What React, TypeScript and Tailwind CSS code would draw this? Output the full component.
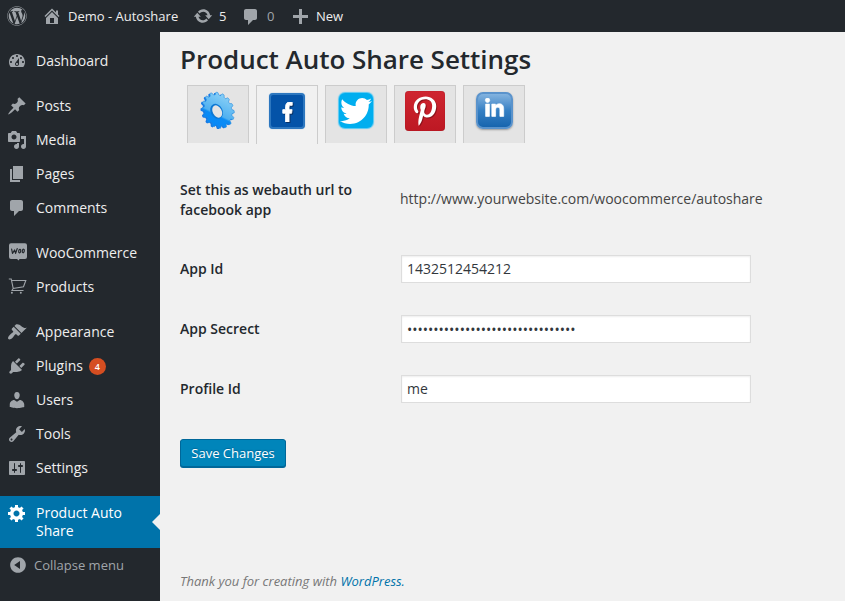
import type { ReactNode } from "react";
import { FaFacebookF, FaLinkedinIn, FaPinterestP, FaTwitter, FaWordpress } from "react-icons/fa";

const paths = {
  home: "M16 8.5l1.53 1.53-1.06 1.06L10 4.6l-6.47 6.49-1.06-1.06L10 2.5l4 4v-2h2v4zm-6-2.46l6 5.99V18H4v-5.97zM12 17v-5H8v5h4z",
  update:
    "M10.2 3.28c3.53 0 6.43 2.61 6.92 6h2.08l-3.5 4-3.5-4h2.32c-.45-1.97-2.21-3.45-4.32-3.45-1.45 0-2.73.71-3.54 1.78L4.95 5.66C6.23 4.2 8.11 3.28 10.2 3.28zm-.4 13.44c-3.52 0-6.43-2.61-6.92-6H.8l3.5-4c1.17 1.33 2.33 2.67 3.5 4H5.48c.45 1.97 2.21 3.45 4.32 3.45 1.45 0 2.73-.71 3.54-1.78l1.71 1.95c-1.28 1.46-3.15 2.38-5.25 2.38z",
  plus: "M17 9v3h-6v6H8v-6H2V9h6V3h3v6h6z",
  dashboard:
    "M3.76 16h12.48c1.1-1.37 1.76-3.11 1.76-5 0-4.42-3.58-8-8-8s-8 3.58-8 8c0 1.89.66 3.63 1.76 5zM10 4c.55 0 1 .45 1 1s-.45 1-1 1-1-.45-1-1 .45-1 1-1zM6 6c.55 0 1 .45 1 1s-.45 1-1 1-1-.45-1-1 .45-1 1-1zm8 0c.55 0 1 .45 1 1s-.45 1-1 1-1-.45-1-1 .45-1 1-1zm-5.37 5.55L12 7v6c0 1.1-.9 2-2 2s-2-.9-2-2c0-.57.24-1.08.63-1.45zM4 10c.55 0 1 .45 1 1s-.45 1-1 1-1-.45-1-1 .45-1 1-1zm12 0c.55 0 1 .45 1 1s-.45 1-1 1-1-.45-1-1 .45-1 1-1zm-5 3c0-.55-.45-1-1-1s-1 .45-1 1 .45 1 1 1 1-.45 1-1z",
  post: "M10.44 3.02l1.82-1.82 6.36 6.35-1.83 1.82c-1.05-.68-2.48-.57-3.41.36l-.75.75c-.92.93-1.04 2.35-.35 3.41l-1.83 1.82-2.41-2.41-2.8 2.79c-.42.42-3.38 2.71-3.8 2.29s1.86-3.39 2.28-3.81l2.79-2.79L4.1 9.36l1.83-1.82c1.05.69 2.48.57 3.4-.36l.75-.75c.93-.92 1.05-2.35.36-3.41z",
  media:
    "M13 11V4c0-.55-.45-1-1-1h-1.67L9 1H5L3.67 3H2c-.55 0-1 .45-1 1v7c0 .55.45 1 1 1h10c.55 0 1-.45 1-1zM7 4.5c1.38 0 2.5 1.12 2.5 2.5S8.38 9.5 7 9.5 4.5 8.38 4.5 7 5.62 4.5 7 4.5zM14 6h5v10.5c0 1.38-1.12 2.5-2.5 2.5S14 17.88 14 16.5s1.12-2.5 2.5-2.5c.17 0 .34.02.5.05V9h-3V6zm-4 8.05V13h2v3.5c0 1.38-1.12 2.5-2.5 2.5S7 17.88 7 16.5 8.12 14 9.5 14c.17 0 .34.02.5.05z",
  page: "M6 15V2h10v13H6zm-1 1h8v2H3V5h2v11z",
  comment: "M5 2h9c1.1 0 2 .9 2 2v7c0 1.1-.9 2-2 2h-2l-5 5v-5H5c-1.1 0-2-.9-2-2V4c0-1.1.9-2 2-2z",
  appearance:
    "M14.48 11.06L7.41 3.99l1.5-1.5c.5-.56 2.3-.47 3.51.32 1.21.8 1.43 1.28 2.91 2.1 1.18.64 2.45 1.26 4.45.85zm-.71.71L6.7 4.7 4.93 6.47c-.39.39-.39 1.02 0 1.41l1.06 1.06c.39.39.39 1.03 0 1.42-.6.6-1.43 1.11-2.21 1.69-.35.26-.7.53-1.01.84C1.43 14.23.4 16.08 1.4 17.07c.99 1 2.84-.03 4.18-1.36.31-.31.58-.66.85-1.02.57-.78 1.08-1.61 1.69-2.21.39-.39 1.02-.39 1.41 0l1.06 1.06c.39.39 1.02.39 1.41 0z",
  plugins:
    "M13.11 4.36L9.87 7.6 8 5.73l3.24-3.24c.35-.34 1.05-.2 1.56.32.52.51.66 1.21.31 1.55zm-8 1.77l.91-1.12 9.01 9.01-1.19.84c-.71.71-2.63 1.16-3.82 1.16H6.14L4.9 17.26c-.59.59-1.54.59-2.12 0-.59-.58-.59-1.53 0-2.12l1.24-1.24v-3.88c0-1.13.4-3.19 1.09-3.89zm7.26 3.97l3.24-3.24c.34-.35 1.04-.21 1.55.31.52.51.66 1.21.31 1.55l-3.24 3.25z",
  users:
    "M10 9.25c-2.27 0-2.73-3.44-2.73-3.44C7 4.02 7.82 2 9.97 2c2.16 0 2.98 2.02 2.71 3.81 0 0-.41 3.44-2.68 3.44zm0 2.57L12.72 10c2.39 0 4.52 2.33 4.52 4.53v2.49s-3.65 1.13-7.24 1.13c-3.65 0-7.24-1.13-7.24-1.13v-2.49c0-2.25 1.94-4.48 4.47-4.48z",
  tools:
    "M16.68 9.77c-1.34 1.34-3.3 1.67-4.95.99l-5.41 6.52c-.99.99-2.59.99-3.58 0s-.99-2.59 0-3.57l6.52-5.42c-.68-1.65-.35-3.61.99-4.95 1.28-1.28 3.12-1.62 4.72-1.06l-2.89 2.89 2.82 2.82 2.86-2.87c.53 1.58.18 3.39-1.08 4.65zM3.81 16.21c.4.39 1.04.39 1.43 0 .4-.4.4-1.04 0-1.43-.39-.4-1.03-.4-1.43 0-.39.39-.39 1.03 0 1.43z",
  settings:
    "M18 16V4c0-.55-.45-1-1-1H3c-.55 0-1 .45-1 1v12c0 .55.45 1 1 1h14c.55 0 1-.45 1-1zM8 11h1c.55 0 1 .45 1 1s-.45 1-1 1H8v1.5c0 .28-.22.5-.5.5s-.5-.22-.5-.5V13H6c-.55 0-1-.45-1-1s.45-1 1-1h1V5.5c0-.28.22-.5.5-.5s.5.22.5.5V11zm5-2h-1c-.55 0-1-.45-1-1s.45-1 1-1h1V5.5c0-.28.22-.5.5-.5s.5.22.5.5V7h1c.55 0 1 .45 1 1s-.45 1-1 1h-1v5.500c0 .28-.22.5-.5.5s-.5-.22-.5-.5V9z",
  generic:
    "M18 12h-2.18c-.17.7-.44 1.35-.81 1.93l1.54 1.54-2.1 2.1-1.54-1.54c-.58.36-1.23.63-1.91.79V19H8v-2.18c-.68-.16-1.33-.43-1.91-.79l-1.54 1.54-2.12-2.12 1.54-1.54c-.36-.58-.63-1.23-.79-1.91H1V9.03h2.17c.16-.7.44-1.35.8-1.94L2.43 5.55l2.1-2.1 1.54 1.54c.58-.37 1.24-.64 1.93-.81V2h3v2.18c.68.16 1.33.43 1.91.79l1.54-1.54 2.12 2.12-1.54 1.54c.36.59.64 1.24.8 1.94H18V12zm-8.5 1.5c1.66 0 3-1.34 3-3s-1.34-3-3-3-3 1.34-3 3 1.34 3 3 3z",
  collapse:
    "M10 2.16c4.33 0 7.84 3.51 7.84 7.84s-3.51 7.84-7.84 7.84S2.16 14.33 2.16 10 5.71 2.16 10 2.16zm2 11.72V6.12L6.18 9.97z",
};

function Icon({ name, className = "" }: { name: keyof typeof paths; className?: string }) {
  return (
    <svg viewBox="0 0 20 20" className={`size-5 shrink-0 fill-current ${className}`}>
      <path fillRule="evenodd" d={paths[name]} />
    </svg>
  );
}

function WooIcon() {
  return (
    <svg viewBox="0 0 20 20" className="size-5 shrink-0">
      <path d="M4 .2h14a2 2 0 0 1 2 2V14a2 2 0 0 1-2 2h-5.500l-.8 1.600L10 16H4a2 2 0 0 1-2-2V2.200a2 2 0 0 1 2-2z" fill="#a0a5aa" />
      <g fill="none" stroke="#23282d" strokeWidth="1.2" strokeLinecap="round" strokeLinejoin="round">
        <path d="M4.600 6l.9 4.400L7.600 7l1 3.400L10.200 5.600" />
        <ellipse cx="12.700" cy="8.100" rx="1" ry="1.800" transform="rotate(12 12.700 8.100)" />
        <ellipse cx="16.300" cy="8" rx="1" ry="1.800" transform="rotate(12 16.300 8)" />
      </g>
    </svg>
  );
}

function CartIcon() {
  return (
    <svg viewBox="0 0 20 20" className="size-5 shrink-0 text-[#a0a5aa]" fill="none" stroke="currentColor" strokeWidth="1.1">
      <path d="M1.800 2h2.400l2 9.500L5 13.500h11.500M4.600 3.500h14.200l-2.300 6.300L6 11.500" />
      <circle cx="4.900" cy="15.800" r="1" fill="currentColor" stroke="none" />
      <circle cx="13.800" cy="15.800" r="1" fill="currentColor" stroke="none" />
    </svg>
  );
}

function MenuItem({ icon, children }: { icon: ReactNode; children: ReactNode }) {
  return (
    <li className="flex h-[34px] items-center gap-[9px] pl-[7px] text-[#a0a5aa]">
      {icon}
      <span className="flex items-center text-sm leading-[18px] text-[#eee]">{children}</span>
    </li>
  );
}

function Sidebar() {
  return (
    <nav className="w-40 shrink-0 bg-[#23282d] pt-3">
      <ul>
        <MenuItem icon={<Icon name="dashboard" />}>Dashboard</MenuItem>
      </ul>
      <ul className="mt-[11px]">
        <MenuItem icon={<Icon name="post" />}>Posts</MenuItem>
        <MenuItem icon={<Icon name="media" />}>Media</MenuItem>
        <MenuItem icon={<Icon name="page" />}>Pages</MenuItem>
        <MenuItem icon={<Icon name="comment" />}>Comments</MenuItem>
      </ul>
      <ul className="mt-[11px]">
        <MenuItem icon={<WooIcon />}>WooCommerce</MenuItem>
        <MenuItem icon={<CartIcon />}>Products</MenuItem>
      </ul>
      <ul className="mt-[11px]">
        <MenuItem icon={<Icon name="appearance" />}>Appearance</MenuItem>
        <MenuItem icon={<Icon name="plugins" />}>
          Plugins
          <span className="ml-[6px] flex size-[17px] items-center justify-center rounded-full bg-[#d54e21] text-[9px] font-semibold leading-[17px] text-white">
            4
          </span>
        </MenuItem>
        <MenuItem icon={<Icon name="users" />}>Users</MenuItem>
        <MenuItem icon={<Icon name="tools" />}>Tools</MenuItem>
        <MenuItem icon={<Icon name="settings" />}>Settings</MenuItem>
      </ul>
      <div className="relative mt-[11px] flex h-[52px] gap-[9px] bg-[#0073aa] pl-[7px] pt-2 text-white">
        <Icon name="generic" className="-mt-px" />
        <span className="w-[100px] text-sm leading-[18px]">Product Auto Share</span>
        <span className="absolute right-0 top-[18px] border-y-8 border-r-8 border-y-transparent border-r-[#f1f1f1]" />
      </div>
      <div className="flex h-[34px] items-center gap-[6px] pl-2 text-[#a0a5aa]">
        <Icon name="collapse" />
        <span className="text-[13px] leading-[18px]">Collapse menu</span>
      </div>
    </nav>
  );
}

function TopBar() {
  return (
    <header className="flex h-8 shrink-0 items-center bg-[#23282d] pl-[7px] text-[13px] text-[#eee]">
      <FaWordpress className="size-5 text-[#a0a5aa]" />
      <Icon name="home" className="ml-[15px] text-[#a0a5aa]" />
      <span className="ml-[6px] w-[125px] pt-px">Demo - Autoshare</span>
      <Icon name="update" className="text-[#a0a5aa]" />
      <span className="ml-[6px] w-[22px] pt-px">5</span>
      <Icon name="comment" className="mt-px text-[#a0a5aa]" />
      <span className="ml-[6px] w-[24px] pt-px text-[#a0a5aa]">0</span>
      <Icon name="plus" className="text-[#a0a5aa]" />
      <span className="ml-[5px] pt-px">New</span>
    </header>
  );
}

const TILT = (-28 * Math.PI) / 180;

// Outline of a 16-tooth gear seen at an angle, centred on (cx, cy).
function gearOutline(cx: number, cy: number) {
  const points: string[] = [];
  for (let i = 0; i < 192; i++) {
    const a = (i / 192) * Math.PI * 2;
    const wave = Math.max(-1, Math.min(1, Math.sin(a * 16) * 1.8));
    const r = 17.4 + wave * 1.3;
    const x = Math.cos(a) * r * 0.82;
    const y = Math.sin(a) * r;
    const px = cx + x * Math.cos(TILT) - y * Math.sin(TILT);
    const py = cy + x * Math.sin(TILT) + y * Math.cos(TILT);
    points.push(`${px.toFixed(2)},${py.toFixed(2)}`);
  }
  return `M${points.join("L")}Z`;
}

function GearLogo() {
  return (
    <svg viewBox="0 0 40 40" className="size-10">
      <defs>
        <linearGradient id="gear" gradientUnits="userSpaceOnUse" x1="11" y1="34" x2="25" y2="5">
          <stop offset="0" stopColor="#0788f8" />
          <stop offset=".36" stopColor="#0a8bf4" />
          <stop offset=".42" stopColor="#4fb0f0" />
          <stop offset="1" stopColor="#84cdf6" />
        </linearGradient>
      </defs>
      <path d={gearOutline(18.6, 20)} fill="#1478e6" />
      <path d={gearOutline(20.2, 19.3)} fill="url(#gear)" stroke="#2488dc" strokeWidth=".6" />
      <ellipse cx="18.600" cy="20.300" rx="6" ry="7.800" transform="rotate(-28 18.600 20.300)" fill="#0d78d4" />
      <ellipse cx="19.200" cy="20.500" rx="4.500" ry="6.500" transform="rotate(-28 19.200 20.500)" fill="#e4e4e4" />
    </svg>
  );
}

function Tab({ active = false, children }: { active?: boolean; children: ReactNode }) {
  return (
    <div
      className={`flex w-[62px] justify-center border border-b-0 border-[#ccc] ${active ? "h-[59px] bg-[#f1f1f1]" : "h-[58px] bg-[#e4e4e4]"}`}
    >
      {children}
    </div>
  );
}

function Field({ label, children }: { label: ReactNode; children: ReactNode }) {
  return (
    <div className="flex h-[60px] items-center">
      <div className="w-[221px] shrink-0 pr-8 text-sm font-semibold leading-5 text-[#23282d]">{label}</div>
      {children}
    </div>
  );
}

const inputClass =
  "h-7 w-[350px] border border-[#ddd] bg-white px-[5px] pb-[2px] text-sm leading-5 text-[#32373c] shadow-[inset_0_1px_2px_rgba(0,0,0,0.07)] outline-none";

const passwordClass =
  "h-7 w-[350px] border border-[#ddd] bg-white px-[5px] text-sm leading-5 text-[#32373c] shadow-[inset_0_1px_2px_rgba(0,0,0,0.07)] outline-none";

export default function App() {
  return (
    <div className="flex h-[601px] w-[845px] flex-col overflow-hidden bg-[#f1f1f1] font-['Open_Sans',sans-serif]">
      <TopBar />
      <div className="flex min-h-0 flex-1">
        <Sidebar />
        <main className="flex flex-1 flex-col pl-5">
          <h1 className="mt-[10px] h-[43px] text-[26px] font-semibold leading-[34px] tracking-[-0.03px] text-[#23282d]">
            Product Auto Share Settings
          </h1>
          <div className="flex h-[59px] items-start gap-[7px] pl-[7px]">
            <Tab>
              <div className="pt-[5px]">
                <GearLogo />
              </div>
            </Tab>
            <Tab active>
              <div className="mt-[7px] flex size-9 items-end justify-center rounded-[4px] border-2 border-[#2d77bf] bg-[#0453a8] pb-[5px] shadow-[0_0_1px_#5b9bd5]">
                <FaFacebookF
                  preserveAspectRatio="none"
                  className="h-[20px] w-[11px] stroke-white stroke-[24] text-white drop-shadow-[1px_1px_0_#0a3265]"
                />
              </div>
            </Tab>
            <Tab>
              <div className="mt-[7px] flex h-[35px] w-[34px] items-center justify-center rounded-[6px] bg-[#00aeef] shadow-[0_0_1px_1px_#55c8f3]">
                <FaTwitter className="size-[32px] shrink-0 text-white" />
              </div>
            </Tab>
            <Tab>
              <div className="mt-[5px] flex size-10 items-center justify-center rounded-[4px] bg-linear-to-b from-[#cf2530] to-[#bd1823] shadow-[inset_0_0_1px_#8d111a]">
                <FaPinterestP className="size-[30px] text-white drop-shadow-[1px_1px_0_#8d111a]" />
              </div>
            </Tab>
            <Tab>
              <div className="mt-[6px] flex size-[37px] items-center justify-center rounded-[7px] border-2 border-[#5a93cc] bg-linear-to-b from-[#83b3df] via-[#3580c4] via-50% to-[#1765ae] shadow-[0_1px_2px_#999]">
                <FaLinkedinIn className="-mt-1 size-[21px] stroke-white stroke-[16] text-white" />
              </div>
            </Tab>
          </div>
          <div className="mt-[25px]">
            <Field label={<span className="block pt-[2px]">Set this as webauth url to facebook app</span>}>
              <span className="-ml-px text-sm leading-5 text-[#444]">http://www.yourwebsite.com/woocommerce/autoshare</span>
            </Field>
            <div className="mt-[10px]">
              <Field label="App Id">
                <input className={inputClass} defaultValue="1432512454212" />
              </Field>
              <Field label="App Secrect">
                <input className={passwordClass} type="password" defaultValue="a1b2c3d4e5f6a7b8c9d0e1f2a3b4c5d6" />
              </Field>
              <Field label="Profile Id">
                <input className={inputClass} defaultValue="me" />
              </Field>
            </div>
          </div>
          <button className="mt-5 h-[28px] w-[106px] rounded-[3px] border border-[#006799] bg-[#0085ba] text-[13px] leading-[26px] text-white shadow-[0_1px_0_#006799] [text-shadow:0_-1px_1px_#006799]">
            Save Changes
          </button>
          <p className="mt-auto mb-[10px] text-[13px] italic leading-5 text-[#777]">
            Thank you for creating with <a className="text-[#0073aa]">WordPress.</a>
          </p>
        </main>
      </div>
    </div>
  );
}
